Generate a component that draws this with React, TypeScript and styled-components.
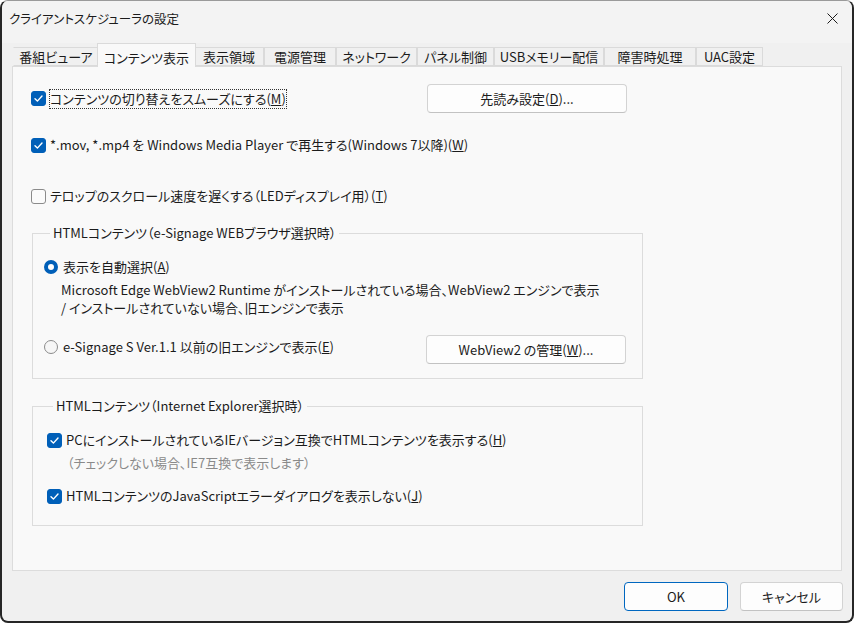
import React from 'react'
import styled, { createGlobalStyle } from 'styled-components'

const GlobalStyle = createGlobalStyle`
    html, body {
        margin: 0;
        padding: 0;
        background: #ffffff;
    }
    body {
        font-family: 'Noto Sans CJK JP', 'Noto Sans', sans-serif;
        font-feature-settings: 'palt';
        font-size: 13px;
        color: #1b1b1b;
    }
`

const TABS = [
    { label: '番組ビューア', width: 86 },
    { label: 'コンテンツ表示', width: 95, active: true },
    { label: '表示領域', width: 70 },
    { label: '電源管理', width: 72 },
    { label: 'ネットワーク', width: 81 },
    { label: 'パネル制御', width: 77 },
    { label: 'USBメモリー配信', width: 110 },
    { label: '障害時処理', width: 92 },
    { label: 'UAC設定', width: 67 },
]

const Mnemonic = ({ k }: { k: string }) => (
    <>
        (<u>{k}</u>)
    </>
)

const CheckIcon = () => (
    <svg width="11" height="11" viewBox="0 0 11 11">
        <path
            d="M2 5.8 L4.4 8.1 L9 3"
            fill="none"
            stroke="#ffffff"
            strokeWidth="1.4"
            strokeLinecap="round"
            strokeLinejoin="round"
        />
    </svg>
)

const Check = ({ checked }: { checked?: boolean }) => (
    <CheckBox $checked={checked}>{checked && <CheckIcon />}</CheckBox>
)

export default function App() {
    return (
        <>
            <GlobalStyle />
            <Window>
                <TitleBar>
                    <Title>クライアントスケジューラの設定</Title>
                    <svg width="11" height="11" viewBox="0 0 11 11">
                        <path
                            d="M0.5 0.5 L10.5 10.5 M10.5 0.5 L0.5 10.5"
                            stroke="#1b1b1b"
                            strokeWidth="1"
                        />
                    </svg>
                </TitleBar>
                <Body>
                    <TabStrip>
                        {TABS.map((t) => (
                            <Tab key={t.label} $width={t.width} $active={t.active}>
                                {t.label}
                            </Tab>
                        ))}
                    </TabStrip>
                    <Panel>
                        <TopRow>
                            <Option>
                                <Check checked />
                                <FocusText>
                                    コンテンツの切り替えをスムーズにする
                                    <Mnemonic k="M" />
                                </FocusText>
                            </Option>
                            <Button $width={200}>
                                先読み設定<Mnemonic k="D" />...
                            </Button>
                        </TopRow>
                        <Option $top={22}>
                            <Check checked />
                            <span>
                                *.mov, *.mp4 を Windows Media Player
                                で再生する(Windows 7以降)
                                <Mnemonic k="W" />
                            </span>
                        </Option>
                        <Option $top={31}>
                            <Check />
                            <span>
                                テロップのスクロール速度を遅くする（LEDディスプレイ用）
                                <Mnemonic k="T" />
                            </span>
                        </Option>

                        <Group>
                            <Legend>HTMLコンテンツ（e-Signage WEBブラウザ選択時）</Legend>
                            <Option>
                                <Radio $checked />
                                <span>
                                    表示を自動選択<Mnemonic k="A" />
                                </span>
                            </Option>
                            <Description>
                                <span>
                                    Microsoft Edge WebView2 Runtime
                                    がインストールされている場合、WebView2 エンジンで表示
                                </span>
                                <span>/ インストールされていない場合、旧エンジンで表示</span>
                            </Description>
                            <GroupRow>
                                <Option $lift>
                                    <Radio />
                                    <span>
                                        e-Signage S Ver.1.1 以前の旧エンジンで表示
                                        <Mnemonic k="E" />
                                    </span>
                                </Option>
                                <Button $width={200}>
                                    WebView2 の管理<Mnemonic k="W" />...
                                </Button>
                            </GroupRow>
                        </Group>

                        <Group $top={18} $bottom={19} $indent={14}>
                            <Legend>HTMLコンテンツ（Internet Explorer選択時）</Legend>
                            <Option>
                                <Check checked />
                                <span>
                                    PCにインストールされているIEバージョン互換でHTMLコンテンツを表示する
                                    <Mnemonic k="H" />
                                </span>
                            </Option>
                            <Hint>（チェックしない場合、IE7互換で表示します）</Hint>
                            <Option $top={14}>
                                <Check checked />
                                <span>
                                    HTMLコンテンツのJavaScriptエラーダイアログを表示しない
                                    <Mnemonic k="J" />
                                </span>
                            </Option>
                        </Group>
                    </Panel>
                    <Footer>
                        <Button $width={104} $primary>
                            OK
                        </Button>
                        <Button $width={103}>キャンセル</Button>
                    </Footer>
                </Body>
            </Window>
        </>
    )
}

const Window = styled.div`
    box-sizing: border-box;
    width: 854px;
    height: 623px;
    background: #f0f0f0;
    border: 2px solid #262626;
    border-top: 1px solid #9a9a9a;
    border-radius: 8px;
    display: flex;
    flex-direction: column;
    overflow: hidden;
`

const TitleBar = styled.div`
    height: 42px;
    flex-shrink: 0;
    display: flex;
    align-items: center;
    justify-content: space-between;
    padding: 0 14px 8px 7px;
    box-sizing: border-box;
    background: #f3f3f3;
`

const Title = styled.div`
    font-size: 12.5px;
    color: #1b1b1b;
`

const Body = styled.div`
    flex: 1;
    display: flex;
    flex-direction: column;
    padding: 0 10px 0 10px;
`

const TabStrip = styled.div`
    height: 23px;
    display: flex;
    align-items: flex-end;
    padding-left: 1px;
    position: relative;
    z-index: 1;
`

const Tab = styled.div<{ $width: number; $active?: boolean }>`
    box-sizing: border-box;
    width: ${(p) => p.$width + (p.$active ? 4 : 0)}px;
    height: ${(p) => (p.$active ? 24 : 19)}px;
    margin: 0 ${(p) => (p.$active ? -2 : 0)}px ${(p) => (p.$active ? -1 : 0)}px;
    padding-top: ${(p) => (p.$active ? 4 : 0)}px;
    display: flex;
    align-items: center;
    justify-content: center;
    font-size: 13px;
    line-height: 18px;
    white-space: nowrap;
    color: #1b1b1b;
    background: ${(p) => (p.$active ? '#f9f9f9' : '#f0f0f0')};
    border: 1px solid #dadada;
    border-bottom: ${(p) => (p.$active ? 'none' : '1px solid #dadada')};
    border-left-color: ${(p) => (p.$active ? '#dadada' : 'transparent')};
    position: relative;
    z-index: ${(p) => (p.$active ? 2 : 0)};

    & + & {
        border-left-color: #dadada;
    }
`

const Panel = styled.div`
    box-sizing: border-box;
    height: 505px;
    background: #f9f9f9;
    border: 1px solid #dcdcdc;
    padding: 0 0 0 18px;
    display: flex;
    flex-direction: column;
    align-items: flex-start;
`

const TopRow = styled.div`
    width: 596px;
    margin-top: 17px;
    display: flex;
    align-items: center;
    justify-content: space-between;
`

const Option = styled.div<{ $top?: number; $lift?: boolean }>`
    display: flex;
    align-items: center;
    gap: 4px;
    height: 20px;
    margin-top: ${(p) => p.$top ?? 0}px;
    margin-bottom: ${(p) => (p.$lift ? 6 : 0)}px;
    font-size: 13px;
    line-height: 18px;
    white-space: nowrap;
    color: #1b1b1b;
`

const FocusText = styled.span`
    outline: 1px dotted #333;
    outline-offset: 0;
`

const CheckBox = styled.span<{ $checked?: boolean }>`
    box-sizing: border-box;
    width: 15px;
    height: 15px;
    flex-shrink: 0;
    border-radius: 3px;
    display: inline-flex;
    align-items: center;
    justify-content: center;
    background: ${(p) => (p.$checked ? '#005fb8' : '#fbfbfb')};
    border: 1px solid ${(p) => (p.$checked ? '#005fb8' : '#8b8b8b')};
`

const Radio = styled.span<{ $checked?: boolean }>`
    box-sizing: border-box;
    width: 14px;
    height: 14px;
    flex-shrink: 0;
    border-radius: 50%;
    margin-right: 1px;
    background: ${(p) => (p.$checked ? '#ffffff' : '#f6f6f6')};
    border: ${(p) => (p.$checked ? '4px solid #005fb8' : '1px solid #8b8b8b')};
`

const Group = styled.fieldset<{ $top?: number; $bottom?: number; $indent?: number }>`
    box-sizing: border-box;
    width: 611px;
    margin: ${(p) => p.$top ?? 18}px 0 0 1px;
    padding: 15px 0 ${(p) => p.$bottom ?? 14}px ${(p) => p.$indent ?? 11}px;
    border: 1px solid #dcdcdc;
    min-width: 0;
    display: flex;
    flex-direction: column;
    align-items: flex-start;
`

const Legend = styled.legend`
    margin-left: 6px;
    padding: 0 3px;
    font-size: 13px;
    line-height: 18px;
    color: #1b1b1b;
`

const Description = styled.div`
    margin: 4px 0 0 17px;
    display: flex;
    flex-direction: column;
    font-size: 13px;
    line-height: 18px;
    color: #1b1b1b;
    white-space: nowrap;
`

const GroupRow = styled.div`
    width: 582px;
    margin-top: 18px;
    display: flex;
    align-items: center;
    justify-content: space-between;
`

const Hint = styled.div`
    margin: 4px 0 0 20px;
    height: 18px;
    font-size: 13px;
    line-height: 18px;
    color: #8a8a8a;
`

const Footer = styled.div`
    display: flex;
    justify-content: flex-end;
    gap: 12px;
    padding: 11px 0 0 0;
    margin-right: -1px;
`

const Button = styled.div<{ $width: number; $primary?: boolean }>`
    box-sizing: border-box;
    width: ${(p) => p.$width}px;
    height: 29px;
    display: flex;
    align-items: center;
    justify-content: center;
    background: #fdfdfd;
    border: 1px solid ${(p) => (p.$primary ? '#0067c0' : '#d3d3d3')};
    border-bottom-color: ${(p) => (p.$primary ? '#0067c0' : '#c2c2c2')};
    border-radius: 4px;
    font-size: 13px;
    color: #1b1b1b;
    white-space: nowrap;
`
